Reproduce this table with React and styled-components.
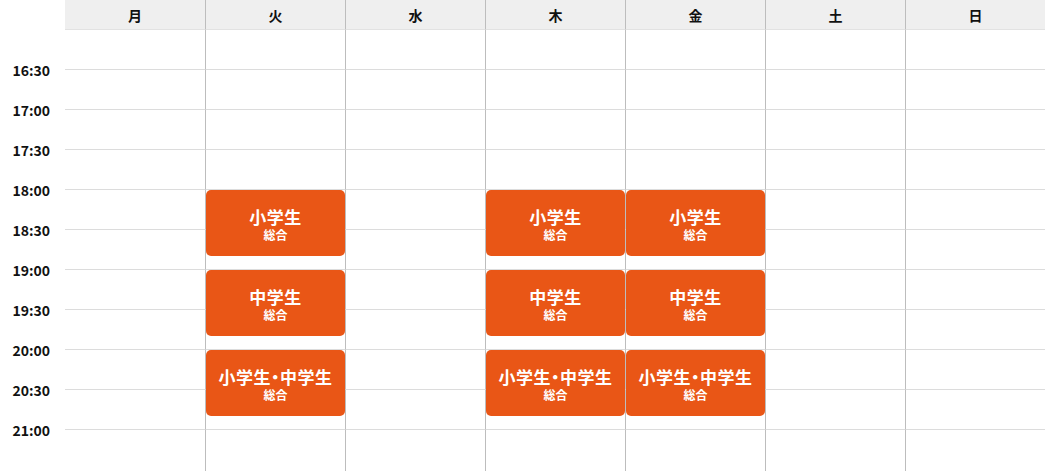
import React from "react";
import styled, { createGlobalStyle } from "styled-components";

const GlobalStyle = createGlobalStyle`
  html, body {
    margin: 0;
    padding: 0;
    background: #fff;
  }
  body {
    font-family: "Noto Sans CJK JP", "Noto Sans", sans-serif;
    color: #111;
  }
`;

const days = ["月", "火", "水", "木", "金", "土", "日"];
const times = ["16:30", "17:00", "17:30", "18:00", "18:30", "19:00", "19:30", "20:00", "20:30", "21:00", ""];

// day index -> lessons (start row, title)
const lessons = [
  { day: 1, row: 4, title: "小学生" },
  { day: 1, row: 6, title: "中学生" },
  { day: 1, row: 8, title: "小学生・中学生" },
  { day: 3, row: 4, title: "小学生" },
  { day: 3, row: 6, title: "中学生" },
  { day: 3, row: 8, title: "小学生・中学生" },
  { day: 4, row: 4, title: "小学生" },
  { day: 4, row: 6, title: "中学生" },
  { day: 4, row: 8, title: "小学生・中学生" },
];

const Wrap = styled.div`
  width: 1045px;
`;

const HeadRow = styled.div`
  display: grid;
  grid-template-columns: 65px repeat(7, 140px);
  height: 30px;
`;

const HeadCell = styled.div`
  background: ${p => (p.$blank ? "#fff" : "#efefef")};
  border-bottom: 1px solid ${p => (p.$blank ? "#fff" : "#e2e2e2")};
  border-left: ${p => (p.$line ? "1px solid #bdbdbd" : "none")};
  display: flex;
  align-items: center;
  justify-content: center;
  font-size: 14px;
  font-weight: 700;
  box-sizing: border-box;
`;

const Body = styled.div`
  display: grid;
  grid-template-columns: 65px repeat(7, 140px);
  grid-template-rows: repeat(10, 40px) 41px;
`;

const TimeCell = styled.div`
  grid-column: 1;
  grid-row: ${p => p.$row};
  position: relative;
`;

const TimeLabel = styled.span`
  position: absolute;
  right: 15px;
  bottom: 0;
  transform: translateY(50%);
  font-size: 14px;
  font-weight: 700;
  line-height: 1;
  color: #111;
`;

const Slot = styled.div`
  grid-column: ${p => p.$col};
  grid-row: ${p => p.$row};
  border-left: ${p => (p.$line ? "1px solid #bdbdbd" : "none")};
  border-bottom: ${p => (p.$last ? "none" : "1px solid #dcdcdc")};
  box-sizing: border-box;
`;

const Lesson = styled.div`
  grid-column: ${p => p.$col};
  grid-row: ${p => p.$row} / span 2;
  z-index: 1;
  margin: 0 0 14px ${p => (p.$line ? "1px" : "0")};
  background: #e95616;
  border-radius: 5px;
  color: #fff;
  display: flex;
  flex-direction: column;
  align-items: center;
  justify-content: center;
  gap: 4px;
  padding-top: 3px;
  box-sizing: border-box;
  font-weight: 700;
`;

const Title = styled.div`
  font-size: 17px;
  line-height: 17px;
  font-feature-settings: "palt";
  letter-spacing: 0.5px;
`;

const Sub = styled.div`
  font-size: 12px;
  line-height: 12px;
`;

export default function App() {
  return (
    <Wrap>
      <GlobalStyle />
      <HeadRow>
        <HeadCell $blank />
        {days.map((d, i) => (
          <HeadCell key={d} $line={i > 0}>
            {d}
          </HeadCell>
        ))}
      </HeadRow>
      <Body>
        {times.map((t, r) => (
          <React.Fragment key={r}>
            <TimeCell $row={r + 1}>{t && <TimeLabel>{t}</TimeLabel>}</TimeCell>
            {days.map((d, i) => (
              <Slot key={d} $col={i + 2} $row={r + 1} $line={i > 0} $last={r === times.length - 1} />
            ))}
          </React.Fragment>
        ))}
        {lessons.map((l, i) => (
          <Lesson key={i} $col={l.day + 2} $row={l.row + 1} $line={l.day > 0}>
            <Title>{l.title}</Title>
            <Sub>総合</Sub>
          </Lesson>
        ))}
      </Body>
    </Wrap>
  );
}
